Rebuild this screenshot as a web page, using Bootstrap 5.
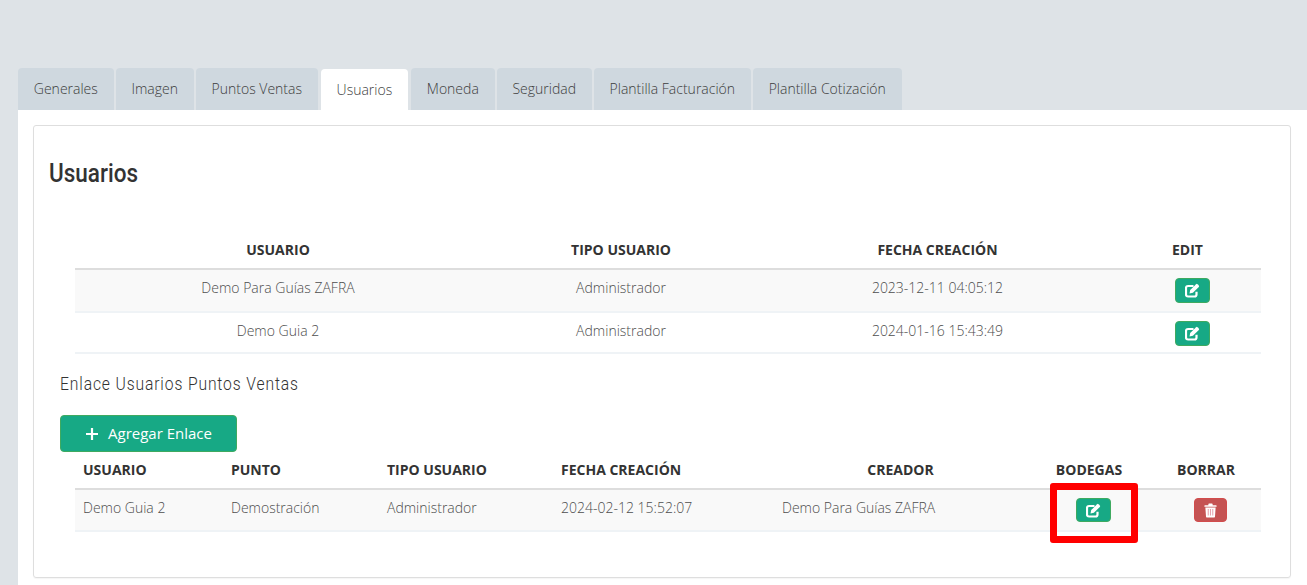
<!DOCTYPE html>
<html lang="es">
<head>
<meta charset="utf-8">
<title>Usuarios</title>
<link href="https://cdn.jsdelivr.net/npm/bootstrap@5.3.0/dist/css/bootstrap.min.css" rel="stylesheet">
<style>
html,body{height:585px;overflow:hidden}
body{background:#dee3e7;font-family:"Open Sans",sans-serif;color:#4d4d4d;font-size:14px;font-weight:300;position:relative}
.tabs-wrap{padding:68px 0 0 18px}
.tabs-wrap .nav-tabs{border-bottom:0;gap:2px;--bs-nav-tabs-border-width:0}
.tabs-wrap .nav-link{background:#cfd8df;color:#3d3d3d;height:42px;padding:0 15.8px;line-height:41px;font-size:14px;font-weight:300;border:0;border-radius:4px 4px 0 0;margin:0}
.tabs-wrap .nav-link.active{background:#fff;color:#3d3d3d;height:41px;margin:1px 1px 0}
.pane-wrap{background:#fff;margin-left:18px;padding:15px 16px 0 15px;height:475px}
.main-box{border:1px solid #dedede;border-radius:3px;height:453px;padding:0 0 0 15px;box-shadow:0 1px 1px rgba(0,0,0,.04)}
.box-title{font-family:Roboto,sans-serif;font-size:25px;font-weight:500;color:#333;margin:0;padding-top:33px;line-height:30px;transform:scaleX(.9);transform-origin:left}
.sub-title{font-family:Roboto,sans-serif;font-size:18px;font-weight:300;color:#333;margin:0 0 0 11px;line-height:20px;letter-spacing:1px;transform:scaleX(.87);transform-origin:left}
.data-table{table-layout:fixed;width:1186px;margin:0 0 0 26px;--bs-table-bg:transparent;--bs-table-striped-bg:#f9f9f9;--bs-table-striped-color:#4d4d4d;--bs-table-color:#4d4d4d;color:#4d4d4d}
.data-table th{font-size:14px;font-weight:700;color:#333;text-transform:uppercase;border-bottom:2px solid #ddd;padding:8px;line-height:20px;height:36px}
.data-table td{font-size:14px;font-weight:300;border-bottom:2px solid #eff3f6;padding:8px;line-height:20px;vertical-align:top}
.top-gap tbody tr:last-child td{padding-bottom:6px}
.top-gap{margin-top:43px}
.sub-gap{margin-top:20px}
.add-btn{background:#17a985;border:1px solid #3faa60;color:#fff;font-size:15px;font-weight:400;width:177px;height:37px;margin:21px 0 0 11px;display:flex;align-items:center;padding:0 0 0 24px;gap:9px;border-radius:4px}
.add-btn:hover{background:#17a985;color:#fff;border-color:#3faa60}
.icon-btn{display:inline-flex;align-items:center;justify-content:center;width:35px;height:25px;padding:0;border-radius:4px;margin-left:10px;vertical-align:top}
.btn-edit-g{background:#17a985;border:1px solid #3faa60}
.btn-del-r{background:#c55353;border:1px solid #d24c4c;width:33px;height:24px;margin-left:8px}
.icon-btn.low-btn{height:24px;margin-left:9px}
.mark-box{position:absolute;left:1050px;top:483px;width:88px;height:60px;border:7px solid #f00;border-radius:3px;pointer-events:none}
</style>
</head>
<body>
<div class="tabs-wrap">
  <ul class="nav nav-tabs">
    <li class="nav-item"><a class="nav-link" href="#">Generales</a></li>
    <li class="nav-item"><a class="nav-link" href="#">Imagen</a></li>
    <li class="nav-item"><a class="nav-link" href="#">Puntos Ventas</a></li>
    <li class="nav-item"><a class="nav-link active" href="#">Usuarios</a></li>
    <li class="nav-item"><a class="nav-link" href="#">Moneda</a></li>
    <li class="nav-item"><a class="nav-link" href="#">Seguridad</a></li>
    <li class="nav-item"><a class="nav-link" href="#">Plantilla Facturación</a></li>
    <li class="nav-item"><a class="nav-link" href="#">Plantilla Cotización</a></li>
  </ul>
</div>
<div class="pane-wrap">
  <div class="main-box">
    <h4 class="box-title">Usuarios</h4>
    <table class="table table-striped data-table top-gap text-center">
      <colgroup><col style="width:406px"><col style="width:280px"><col style="width:353px"><col style="width:147px"></colgroup>
      <thead><tr><th>Usuario</th><th>Tipo Usuario</th><th>Fecha Creación</th><th>Edit</th></tr></thead>
      <tbody>
        <tr><td>Demo Para Guías ZAFRA</td><td>Administrador</td><td>2023-12-11 04:05:12</td><td><a href="#" class="btn icon-btn btn-edit-g"><svg width="15" height="15" viewBox="0 0 15 15" fill="none"><path d="M11.500 8.700v2.800a2 2 0 0 1-2 2H3a2 2 0 0 1-2-2V5a2 2 0 0 1 2-2h5.500" stroke="#fff" stroke-width="2.200"/><path d="M4.500 10.500l.7-3.400 5.900-5.900a1 1 0 0 1 1.400 0l1.300 1.300a1 1 0 0 1 0 1.400L7.900 9.800z" fill="#fff"/></svg></a></td></tr>
        <tr><td>Demo Guia 2</td><td>Administrador</td><td>2024-01-16 15:43:49</td><td><a href="#" class="btn icon-btn btn-edit-g"><svg width="15" height="15" viewBox="0 0 15 15" fill="none"><path d="M11.500 8.700v2.800a2 2 0 0 1-2 2H3a2 2 0 0 1-2-2V5a2 2 0 0 1 2-2h5.500" stroke="#fff" stroke-width="2.200"/><path d="M4.500 10.500l.7-3.400 5.900-5.900a1 1 0 0 1 1.400 0l1.300 1.300a1 1 0 0 1 0 1.400L7.900 9.800z" fill="#fff"/></svg></a></td></tr>
      </tbody>
    </table>
    <h5 class="sub-title sub-gap">Enlace Usuarios Puntos Ventas</h5>
    <a href="#" class="btn add-btn"><svg width="14" height="14" viewBox="0 0 14 14"><path d="M7 1v12M1 7h12" stroke="#fff" stroke-width="2.200"/></svg><span>Agregar Enlace</span></a>
    <table class="table table-striped data-table">
      <colgroup><col style="width:148px"><col style="width:156px"><col style="width:174px"><col style="width:221px"><col style="width:253px"><col style="width:124px"><col style="width:110px"></colgroup>
      <thead><tr><th>Usuario</th><th>Punto</th><th>Tipo Usuario</th><th>Fecha Creación</th><th class="text-center">Creador</th><th class="text-center">Bodegas</th><th class="text-center">Borrar</th></tr></thead>
      <tbody>
        <tr><td>Demo Guia 2</td><td>Demostración</td><td>Administrador</td><td>2024-02-12 15:52:07</td><td>Demo Para Guías ZAFRA</td>
        <td class="text-center"><a href="#" class="btn icon-btn low-btn btn-edit-g"><svg width="15" height="15" viewBox="0 0 15 15" fill="none"><path d="M11.500 8.700v2.800a2 2 0 0 1-2 2H3a2 2 0 0 1-2-2V5a2 2 0 0 1 2-2h5.500" stroke="#fff" stroke-width="2.200"/><path d="M4.500 10.500l.7-3.400 5.900-5.900a1 1 0 0 1 1.400 0l1.300 1.300a1 1 0 0 1 0 1.400L7.900 9.800z" fill="#fff"/></svg></a></td>
        <td class="text-center"><a href="#" class="btn icon-btn btn-del-r"><svg width="13" height="15" viewBox="0 0 12 14"><path d="M4 1.200C4 .8 4.300.5 4.700.5h2.600c.4 0 .7.3.7.7V2h3.200c.3 0 .5.2.5.5V3.400H.3V2.500C.3 2.200.5 2 .8 2H4z" fill="#fff"/><path d="M1.200 4.200h9.600l-.6 8.400c0 .5-.4.9-.9.9H2.700c-.5 0-.9-.4-.9-.9z" fill="#fff"/><path d="M3.900 5.700v6M6 5.700v6M8.100 5.700v6" stroke="#e7a6b0" stroke-width="1"/></svg></a></td></tr>
      </tbody>
    </table>
  </div>
</div>
<div class="mark-box"></div>
<script src="https://cdn.jsdelivr.net/npm/bootstrap@5.3.0/dist/js/bootstrap.bundle.min.js"></script>
</body>
</html>
